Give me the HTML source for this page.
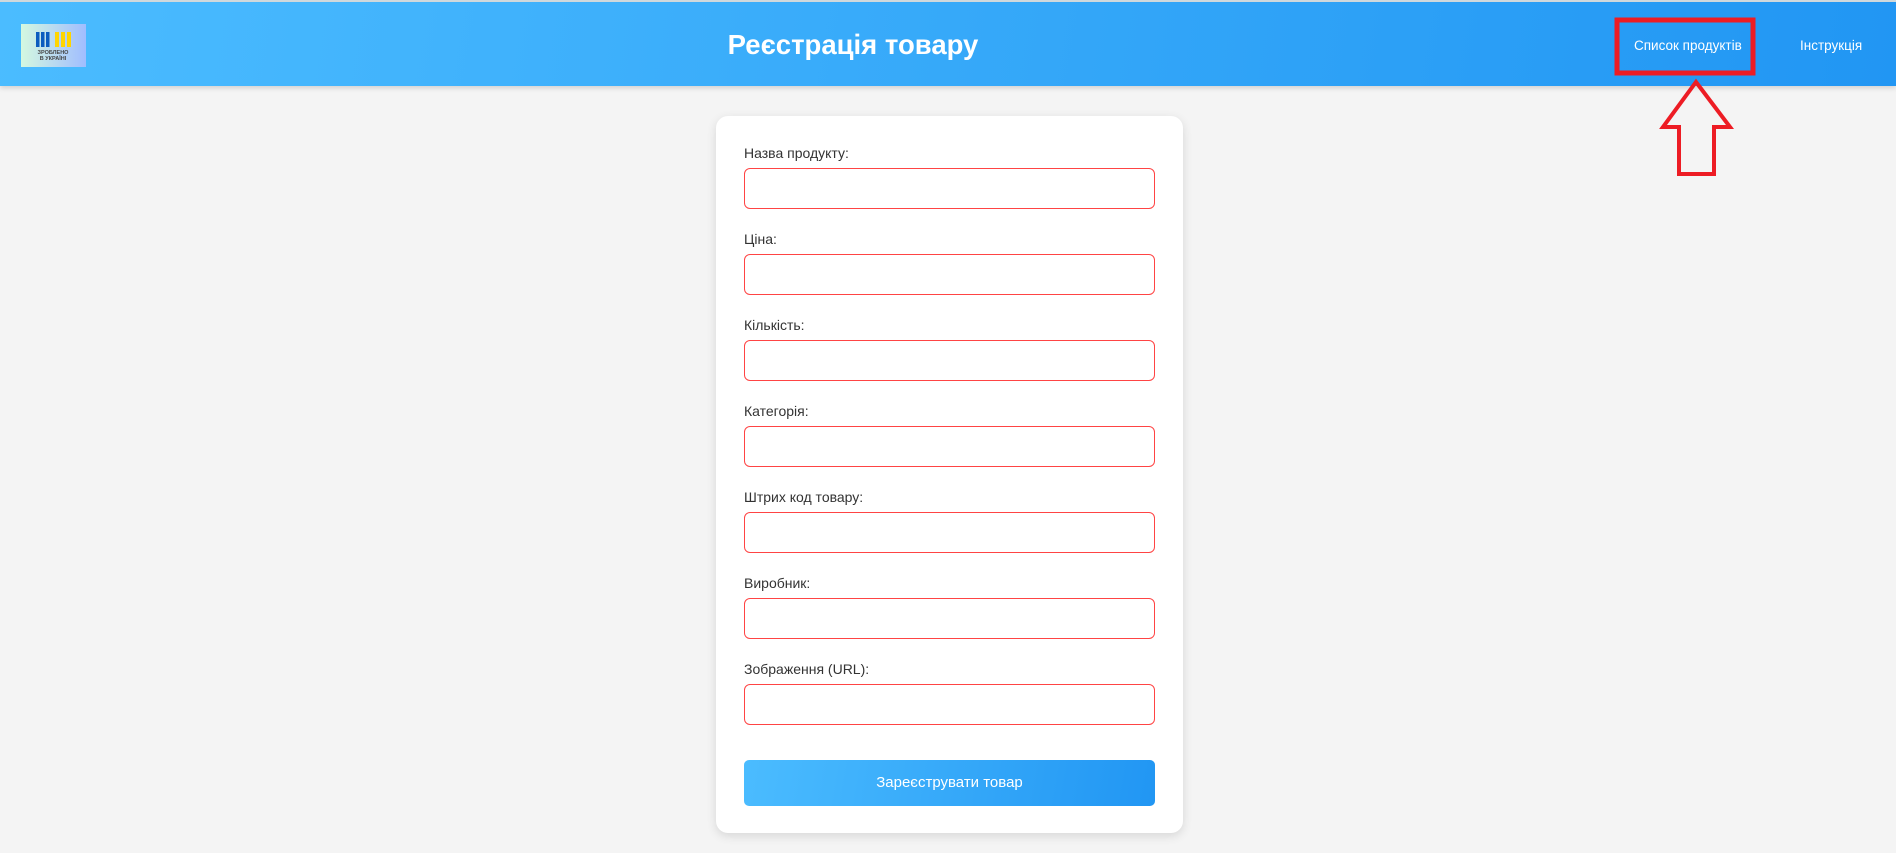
<!DOCTYPE html>
<html><head><meta charset="utf-8"><style>
*{box-sizing:border-box;margin:0;padding:0}
body{width:1896px;height:853px;background:#f4f4f4;font-family:"Liberation Sans",Arial,sans-serif;position:relative;overflow:hidden}
.hdr{position:absolute;left:0;top:0;width:1896px;height:86px;background:linear-gradient(100deg,#4bbcff,#2196f3);box-shadow:0 2px 5px rgba(0,0,0,.15);border-top:2px solid #cfd8dc}
.logo{position:absolute;left:21px;top:22px;width:65px;height:43px;background:linear-gradient(90deg,#d4f8e0,#a0bdff)}
.t{position:absolute;left:0;width:1706px;text-align:center;top:27px;color:#fff;font-weight:bold;font-size:27.5px}
.nav{position:absolute;top:36px;color:#fff;font-size:13.5px}
.card{position:absolute;left:716px;top:116px;width:467px;height:717px;background:#fff;border-radius:12px;box-shadow:0 3px 10px rgba(0,0,0,.12)}
.lbl{position:absolute;left:744px;font-size:14px;color:#333}
.inp{position:absolute;left:744px;width:411px;height:41px;border:1.5px solid #ff4444;border-radius:6px;background:#fff}
.btn{position:absolute;left:744px;top:760px;width:411px;height:46px;border-radius:5px;background:linear-gradient(100deg,#4bbcff,#2196f3);color:#fff;font-size:15px;text-align:center;line-height:46px}
</style></head><body>
<div class="hdr">
<div class="logo">
<svg width="65" height="43" viewBox="0 0 65 43">
<rect x="15" y="8" width="3.5" height="15" fill="#0b5cbf"/><rect x="20" y="8" width="3.5" height="15" fill="#0b5cbf"/><rect x="25" y="8" width="3.5" height="15" fill="#0b5cbf"/>
<rect x="34" y="8" width="4" height="15" fill="#ffd500"/><rect x="40" y="8" width="4" height="15" fill="#ffd500"/><rect x="46" y="8" width="4" height="15" fill="#ffd500"/>
<text x="32" y="30" font-size="5.5" font-weight="bold" text-anchor="middle" fill="#444" font-family="Liberation Sans">ЗРОБЛЕНО</text>
<text x="32" y="36" font-size="5.5" font-weight="bold" text-anchor="middle" fill="#444" font-family="Liberation Sans">В УКРАЇНІ</text>
</svg></div>
<div class="t">Реєстрація товару</div>
<div class="nav" style="left:1634px">Список продуктів</div>
<div class="nav" style="left:1800px">Інструкція</div>
</div>
<svg style="position:absolute;left:0;top:0" width="1896" height="200">
<rect x="1617" y="20" width="136" height="53" fill="none" stroke="#ed1c24" stroke-width="5"/>
<path d="M1696 82 L1730 127 L1714 127 L1714 174 L1679 174 L1679 127 L1663 127 Z" fill="none" stroke="#ed1c24" stroke-width="4" stroke-linejoin="miter"/>
</svg>
<div class="card"></div>
<div class="lbl" style="top:145px">Назва продукту:</div><div class="inp" style="top:168px"></div>
<div class="lbl" style="top:231px">Ціна:</div><div class="inp" style="top:254px"></div>
<div class="lbl" style="top:317px">Кількість:</div><div class="inp" style="top:340px"></div>
<div class="lbl" style="top:403px">Категорія:</div><div class="inp" style="top:426px"></div>
<div class="lbl" style="top:489px">Штрих код товару:</div><div class="inp" style="top:512px"></div>
<div class="lbl" style="top:575px">Виробник:</div><div class="inp" style="top:598px"></div>
<div class="lbl" style="top:661px">Зображення (URL):</div><div class="inp" style="top:684px"></div>
<div class="btn">Зареєструвати товар</div>
</body></html>
